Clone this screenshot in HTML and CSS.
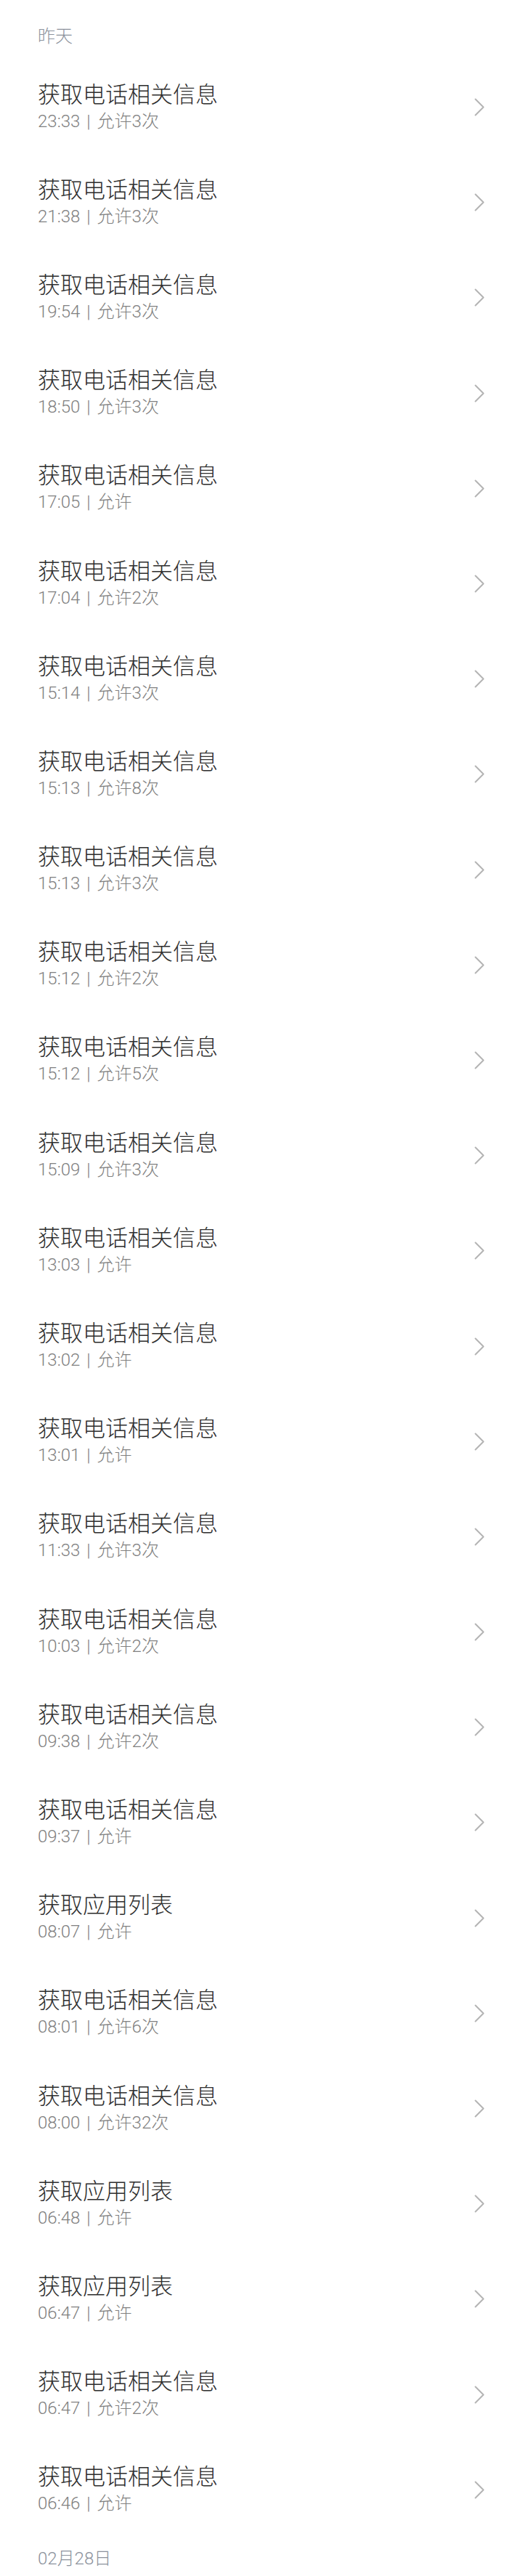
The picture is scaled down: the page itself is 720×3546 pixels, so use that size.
FILE: index.html
```html
<!DOCTYPE html>
<html lang="zh-CN">
<head>
<meta charset="utf-8">
<title>权限记录</title>
<link rel="stylesheet" href="styles.css">
</head>
<body>
<div class="page">
  <div class="group-title">昨天</div>
  <ul class="list">
    <li class="item"><div class="text"><div class="title">获取电话相关信息</div><div class="sub">23:33<span class="sep">|</span>允许3次</div></div><svg class="chev" viewBox="0 0 14 25"><path d="M1.5 1.5 L12.5 12.5 L1.5 23.5"/></svg></li>
    <li class="item"><div class="text"><div class="title">获取电话相关信息</div><div class="sub">21:38<span class="sep">|</span>允许3次</div></div><svg class="chev" viewBox="0 0 14 25"><path d="M1.5 1.5 L12.5 12.5 L1.5 23.5"/></svg></li>
    <li class="item"><div class="text"><div class="title">获取电话相关信息</div><div class="sub">19:54<span class="sep">|</span>允许3次</div></div><svg class="chev" viewBox="0 0 14 25"><path d="M1.5 1.5 L12.5 12.5 L1.5 23.5"/></svg></li>
    <li class="item"><div class="text"><div class="title">获取电话相关信息</div><div class="sub">18:50<span class="sep">|</span>允许3次</div></div><svg class="chev" viewBox="0 0 14 25"><path d="M1.5 1.5 L12.5 12.5 L1.5 23.5"/></svg></li>
    <li class="item"><div class="text"><div class="title">获取电话相关信息</div><div class="sub">17:05<span class="sep">|</span>允许</div></div><svg class="chev" viewBox="0 0 14 25"><path d="M1.5 1.5 L12.5 12.5 L1.5 23.5"/></svg></li>
    <li class="item"><div class="text"><div class="title">获取电话相关信息</div><div class="sub">17:04<span class="sep">|</span>允许2次</div></div><svg class="chev" viewBox="0 0 14 25"><path d="M1.5 1.5 L12.5 12.5 L1.5 23.5"/></svg></li>
    <li class="item"><div class="text"><div class="title">获取电话相关信息</div><div class="sub">15:14<span class="sep">|</span>允许3次</div></div><svg class="chev" viewBox="0 0 14 25"><path d="M1.5 1.5 L12.5 12.5 L1.5 23.5"/></svg></li>
    <li class="item"><div class="text"><div class="title">获取电话相关信息</div><div class="sub">15:13<span class="sep">|</span>允许8次</div></div><svg class="chev" viewBox="0 0 14 25"><path d="M1.5 1.5 L12.5 12.5 L1.5 23.5"/></svg></li>
    <li class="item"><div class="text"><div class="title">获取电话相关信息</div><div class="sub">15:13<span class="sep">|</span>允许3次</div></div><svg class="chev" viewBox="0 0 14 25"><path d="M1.5 1.5 L12.5 12.5 L1.5 23.5"/></svg></li>
    <li class="item"><div class="text"><div class="title">获取电话相关信息</div><div class="sub">15:12<span class="sep">|</span>允许2次</div></div><svg class="chev" viewBox="0 0 14 25"><path d="M1.5 1.5 L12.5 12.5 L1.5 23.5"/></svg></li>
    <li class="item"><div class="text"><div class="title">获取电话相关信息</div><div class="sub">15:12<span class="sep">|</span>允许5次</div></div><svg class="chev" viewBox="0 0 14 25"><path d="M1.5 1.5 L12.5 12.5 L1.5 23.5"/></svg></li>
    <li class="item"><div class="text"><div class="title">获取电话相关信息</div><div class="sub">15:09<span class="sep">|</span>允许3次</div></div><svg class="chev" viewBox="0 0 14 25"><path d="M1.5 1.5 L12.5 12.5 L1.5 23.5"/></svg></li>
    <li class="item"><div class="text"><div class="title">获取电话相关信息</div><div class="sub">13:03<span class="sep">|</span>允许</div></div><svg class="chev" viewBox="0 0 14 25"><path d="M1.5 1.5 L12.5 12.5 L1.5 23.5"/></svg></li>
    <li class="item"><div class="text"><div class="title">获取电话相关信息</div><div class="sub">13:02<span class="sep">|</span>允许</div></div><svg class="chev" viewBox="0 0 14 25"><path d="M1.5 1.5 L12.5 12.5 L1.5 23.5"/></svg></li>
    <li class="item"><div class="text"><div class="title">获取电话相关信息</div><div class="sub">13:01<span class="sep">|</span>允许</div></div><svg class="chev" viewBox="0 0 14 25"><path d="M1.5 1.5 L12.5 12.5 L1.5 23.5"/></svg></li>
    <li class="item"><div class="text"><div class="title">获取电话相关信息</div><div class="sub">11:33<span class="sep">|</span>允许3次</div></div><svg class="chev" viewBox="0 0 14 25"><path d="M1.5 1.5 L12.5 12.5 L1.5 23.5"/></svg></li>
    <li class="item"><div class="text"><div class="title">获取电话相关信息</div><div class="sub">10:03<span class="sep">|</span>允许2次</div></div><svg class="chev" viewBox="0 0 14 25"><path d="M1.5 1.5 L12.5 12.5 L1.5 23.5"/></svg></li>
    <li class="item"><div class="text"><div class="title">获取电话相关信息</div><div class="sub">09:38<span class="sep">|</span>允许2次</div></div><svg class="chev" viewBox="0 0 14 25"><path d="M1.5 1.5 L12.5 12.5 L1.5 23.5"/></svg></li>
    <li class="item"><div class="text"><div class="title">获取电话相关信息</div><div class="sub">09:37<span class="sep">|</span>允许</div></div><svg class="chev" viewBox="0 0 14 25"><path d="M1.5 1.5 L12.5 12.5 L1.5 23.5"/></svg></li>
    <li class="item"><div class="text"><div class="title">获取应用列表</div><div class="sub">08:07<span class="sep">|</span>允许</div></div><svg class="chev" viewBox="0 0 14 25"><path d="M1.5 1.5 L12.5 12.5 L1.5 23.5"/></svg></li>
    <li class="item"><div class="text"><div class="title">获取电话相关信息</div><div class="sub">08:01<span class="sep">|</span>允许6次</div></div><svg class="chev" viewBox="0 0 14 25"><path d="M1.5 1.5 L12.5 12.5 L1.5 23.5"/></svg></li>
    <li class="item"><div class="text"><div class="title">获取电话相关信息</div><div class="sub">08:00<span class="sep">|</span>允许32次</div></div><svg class="chev" viewBox="0 0 14 25"><path d="M1.5 1.5 L12.5 12.5 L1.5 23.5"/></svg></li>
    <li class="item"><div class="text"><div class="title">获取应用列表</div><div class="sub">06:48<span class="sep">|</span>允许</div></div><svg class="chev" viewBox="0 0 14 25"><path d="M1.5 1.5 L12.5 12.5 L1.5 23.5"/></svg></li>
    <li class="item"><div class="text"><div class="title">获取应用列表</div><div class="sub">06:47<span class="sep">|</span>允许</div></div><svg class="chev" viewBox="0 0 14 25"><path d="M1.5 1.5 L12.5 12.5 L1.5 23.5"/></svg></li>
    <li class="item"><div class="text"><div class="title">获取电话相关信息</div><div class="sub">06:47<span class="sep">|</span>允许2次</div></div><svg class="chev" viewBox="0 0 14 25"><path d="M1.5 1.5 L12.5 12.5 L1.5 23.5"/></svg></li>
    <li class="item"><div class="text"><div class="title">获取电话相关信息</div><div class="sub">06:46<span class="sep">|</span>允许</div></div><svg class="chev" viewBox="0 0 14 25"><path d="M1.5 1.5 L12.5 12.5 L1.5 23.5"/></svg></li>
  </ul>
  <div class="group-title">02月28日</div>
</div>
</body>
</html>
```

FILE: styles.css
```css
* { box-sizing: border-box; }
html, body {
  margin: 0;
  padding: 0;
  background: #ffffff;
}
body {
  font-family: "Roboto", "Noto Sans CJK SC", sans-serif;
  font-weight: 300;
}
.page {
  padding-top: 21px;
}
.group-title {
  padding: 15px 52px 18px;
  font-size: 24px;
  line-height: 28px;
  color: #8c929c;
}
.list {
  list-style: none;
  margin: 0;
  padding: 0;
}
.item {
  height: 131.2px;
  display: flex;
  align-items: center;
  justify-content: space-between;
  padding: 0 53px 0 52px;
}
.text {
  display: flex;
  flex-direction: column;
}
.title {
  font-size: 31px;
  line-height: 38px;
  color: #2e2e2e;
}
.sub {
  font-size: 24px;
  line-height: 34px;
  color: #808080;
}
.sep {
  margin: 0 9px;
}
.chev {
  width: 14px;
  height: 25px;
  flex: none;
}
.chev path {
  fill: none;
  stroke: #b4b4b4;
  stroke-width: 2;
  stroke-linecap: round;
  stroke-linejoin: round;
}
```
